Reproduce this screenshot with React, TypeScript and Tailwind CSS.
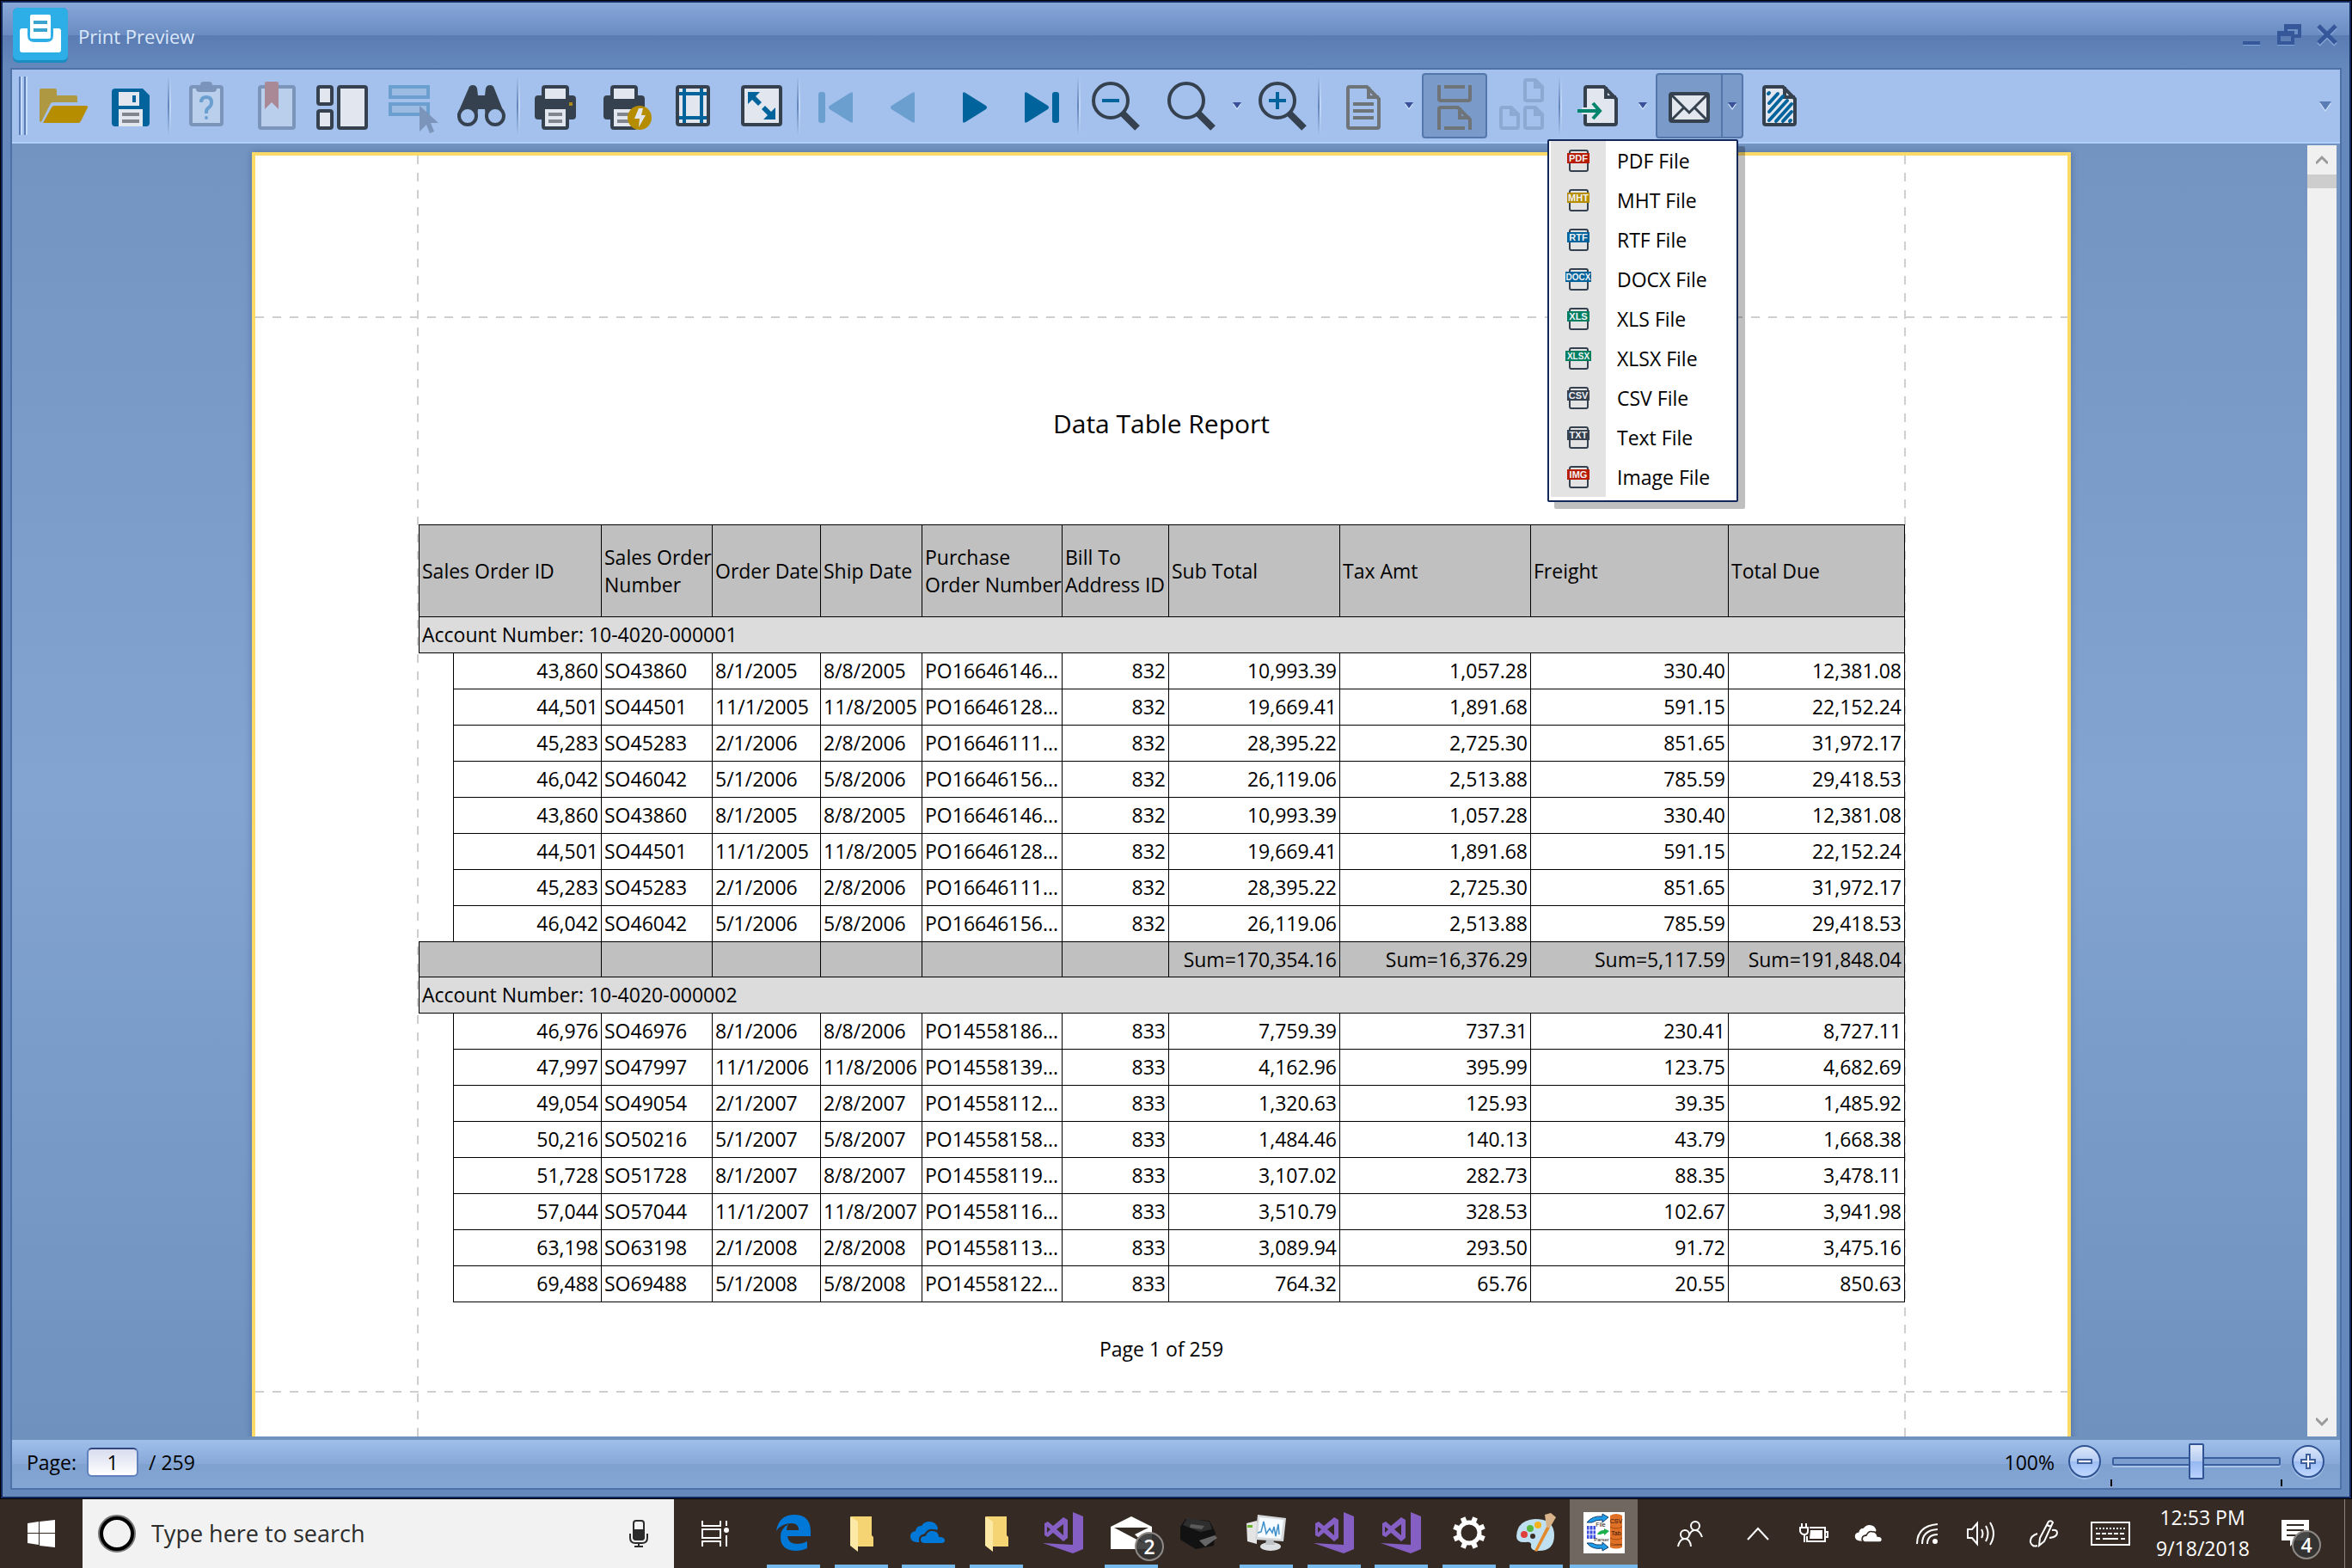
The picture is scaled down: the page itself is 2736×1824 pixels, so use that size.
import type { ReactNode } from 'react';

interface IconProps {
  children: ReactNode;
}

interface ToolButtonProps {
  label: string;
  pressed?: boolean;
  disabled?: boolean;
  children: ReactNode;
}

const DARK = '#364150';
const LIGHT = '#e1e6ef';
const BLUE = '#00639c';
const PALE_BLUE = '#6b9fcf';

const columns = [
  { title: 'Sales Order ID', align: 'right' },
  { title: 'Sales Order Number', align: 'left' },
  { title: 'Order Date', align: 'left' },
  { title: 'Ship Date', align: 'left' },
  { title: 'Purchase Order Number', align: 'left' },
  { title: 'Bill To Address ID', align: 'right' },
  { title: 'Sub Total', align: 'right' },
  { title: 'Tax Amt', align: 'right' },
  { title: 'Freight', align: 'right' },
  { title: 'Total Due', align: 'right' },
];

const firstHalf = [
  ['43,860', 'SO43860', '8/1/2005', '8/8/2005', 'PO16646146...', '832', '10,993.39', '1,057.28', '330.40', '12,381.08'],
  ['44,501', 'SO44501', '11/1/2005', '11/8/2005', 'PO16646128...', '832', '19,669.41', '1,891.68', '591.15', '22,152.24'],
  ['45,283', 'SO45283', '2/1/2006', '2/8/2006', 'PO16646111...', '832', '28,395.22', '2,725.30', '851.65', '31,972.17'],
  ['46,042', 'SO46042', '5/1/2006', '5/8/2006', 'PO16646156...', '832', '26,119.06', '2,513.88', '785.59', '29,418.53'],
];

const groups = [
  {
    account: '10-4020-000001',
    rows: [...firstHalf, ...firstHalf],
    sums: ['Sum=170,354.16', 'Sum=16,376.29', 'Sum=5,117.59', 'Sum=191,848.04'],
  },
  {
    account: '10-4020-000002',
    rows: [
      ['46,976', 'SO46976', '8/1/2006', '8/8/2006', 'PO14558186...', '833', '7,759.39', '737.31', '230.41', '8,727.11'],
      ['47,997', 'SO47997', '11/1/2006', '11/8/2006', 'PO14558139...', '833', '4,162.96', '395.99', '123.75', '4,682.69'],
      ['49,054', 'SO49054', '2/1/2007', '2/8/2007', 'PO14558112...', '833', '1,320.63', '125.93', '39.35', '1,485.92'],
      ['50,216', 'SO50216', '5/1/2007', '5/8/2007', 'PO14558158...', '833', '1,484.46', '140.13', '43.79', '1,668.38'],
      ['51,728', 'SO51728', '8/1/2007', '8/8/2007', 'PO14558119...', '833', '3,107.02', '282.73', '88.35', '3,478.11'],
      ['57,044', 'SO57044', '11/1/2007', '11/8/2007', 'PO14558116...', '833', '3,510.79', '328.53', '102.67', '3,941.98'],
      ['63,198', 'SO63198', '2/1/2008', '2/8/2008', 'PO14558113...', '833', '3,089.94', '293.50', '91.72', '3,475.16'],
      ['69,488', 'SO69488', '5/1/2008', '5/8/2008', 'PO14558122...', '833', '764.32', '65.76', '20.55', '850.63'],
    ],
    sums: null,
  },
];

const formats = [
  { badge: 'PDF', label: 'PDF File', color: '#b81c00' },
  { badge: 'MHT', label: 'MHT File', color: '#b78d00' },
  { badge: 'RTF', label: 'RTF File', color: '#00639c' },
  { badge: 'DOCX', label: 'DOCX File', color: '#00639c' },
  { badge: 'XLS', label: 'XLS File', color: '#008060' },
  { badge: 'XLSX', label: 'XLSX File', color: '#008060' },
  { badge: 'CSV', label: 'CSV File', color: '#364150' },
  { badge: 'TXT', label: 'Text File', color: '#364150' },
  { badge: 'IMG', label: 'Image File', color: '#b81c00' },
];

/* ---------- toolbar icons ---------- */

function Icon({ children }: IconProps) {
  return (
    <svg viewBox="0 0 64 64" className="size-16 shrink-0" fill="none" aria-hidden="true">
      {children}
    </svg>
  );
}

function OpenIcon() {
  return (
    <Icon>
      <path d="M4 50V14q0-2 2-2h16q2 0 2 2v6h22q2 0 2 2v6H20q-3 0-4 3L6 51z" fill="#ae9841" />
      <path d="M21 32h37q3 0 2 2l-8 16q-1 2-3 2H8l10-18q1-2 3-2z" fill="#b78d00" />
    </Icon>
  );
}

function SaveIcon() {
  return (
    <Icon>
      <path d="M12 12h32l8 8v32q0 4-4 4H12q-4 0-4-4V16q0-4 4-4z" fill={BLUE} />
      <path d="M16 16h24v16H16zM16 36h28v20H16z" fill={LIGHT} />
      <path d="M32 20h4v8h-4z" fill={BLUE} />
      <path d="M20 40h20v4H20zM20 48h20v4H20z" fill="#808590" />
    </Icon>
  );
}

function ParametersIcon() {
  return (
    <Icon>
      <rect x="14" y="10" width="36" height="44" rx="2" fill="#b9cfec" stroke="#7b94b9" strokeWidth="4" />
      <path d="M20 8h5q0-4 4-4h6q4 0 4 4h5v4q0 4-4 4H24q-4 0-4-4z" fill="#7b94b9" />
      <path d="M26 28q0-6 6-6t6 6q0 4-3 6t-3 5v2" stroke={PALE_BLUE} strokeWidth="4" />
      <circle cx="32" cy="46" r="2" fill={PALE_BLUE} />
    </Icon>
  );
}

function BookmarksIcon() {
  return (
    <Icon>
      <rect x="14" y="10" width="40" height="48" rx="2" fill="#b9cfec" stroke="#7b94b9" strokeWidth="4" />
      <path d="M20 6q0-2 2-2h12q2 0 2 2v30l-8-8-8 8z" fill="#a98996" />
    </Icon>
  );
}

function ThumbnailsIcon() {
  return (
    <Icon>
      <g fill={LIGHT} stroke={DARK} strokeWidth="4">
        <rect x="2" y="10" width="16" height="20" rx="2" />
        <rect x="2" y="38" width="16" height="20" rx="2" />
        <rect x="26" y="10" width="32" height="48" rx="2" />
      </g>
    </Icon>
  );
}

function EditFieldsIcon() {
  return (
    <Icon>
      <g fill="#9bbbe3" stroke={PALE_BLUE} strokeWidth="4">
        <path d="M6 10h44v12H6zM6 30h44v12H6z" />
      </g>
      <path d="M40 32l22 20h-9l4 10-5 2-4-10-8 8z" fill="#7b94b9" />
    </Icon>
  );
}

function SearchIcon() {
  return (
    <Icon>
      <path d="M17 12q1-4 5-4t5 4l1 8h8l1-8q1-4 5-4t5 4l12 30q0 2-1 4H37l-1-10h-8l-1 10H5q-1-2-1-4z" fill={DARK} />
      <circle cx="16" cy="44" r="10" fill="#a3c1ec" stroke={DARK} strokeWidth="4" />
      <circle cx="48" cy="44" r="10" fill="#a3c1ec" stroke={DARK} strokeWidth="4" />
    </Icon>
  );
}

function PrinterShape() {
  return (
    <>
      <path d="M20 8h24q4 0 4 4v8h4q4 0 4 4v20q0 4-4 4h-4v8q0 4-4 4H20q-4 0-4-4v-8h-4q-4 0-4-4V24q0-4 4-4h4v-8q0-4 4-4z" fill={DARK} />
      <path d="M20 12h24v12H20zM20 36h24v20H20z" fill={LIGHT} />
      <path d="M24 40h16v4H24zM24 48h16v4H24z" fill="#808590" />
    </>
  );
}

function PrintIcon() {
  return (
    <Icon>
      <PrinterShape />
      <path d="M48 28h4v4h-4z" fill="#ab8a17" />
    </Icon>
  );
}

function QuickPrintIcon() {
  return (
    <Icon>
      <PrinterShape />
      <circle cx="50" cy="46" r="14" fill="#b78d00" />
      <path d="M49 35h5l-2 8h5l-8 14 1-10h-6z" fill={LIGHT} />
    </Icon>
  );
}

function MarginsIcon() {
  return (
    <Icon>
      <rect x="14" y="10" width="36" height="44" rx="2" fill={LIGHT} />
      <path d="M22 12v40M42 12v40M16 18h32M16 46h32" stroke={BLUE} strokeWidth="4" />
      <rect x="14" y="10" width="36" height="44" rx="2" stroke={DARK} strokeWidth="4" />
    </Icon>
  );
}

function ScaleIcon() {
  return (
    <Icon>
      <rect x="10" y="10" width="44" height="44" rx="2" fill={LIGHT} stroke={DARK} strokeWidth="4" />
      <path d="M16 16h14l-5 5 7 7-4 4-7-7-5 5zM48 48H34l5-5-7-7 4-4 7 7 5-5z" fill={BLUE} />
    </Icon>
  );
}

function FirstIcon() {
  return (
    <Icon>
      <rect x="12" y="16" width="8" height="36" rx="3" fill={PALE_BLUE} />
      <path d="M52 18v32q0 3-3 1L25 36q-2-2 0-4l24-15q3-2 3 1z" fill={PALE_BLUE} />
    </Icon>
  );
}

function PrevIcon() {
  return (
    <Icon>
      <path d="M44 18v32q0 3-3 1L17 36q-2-2 0-4l24-15q3-2 3 1z" fill={PALE_BLUE} />
    </Icon>
  );
}

function NextIcon() {
  return (
    <Icon>
      <path d="M20 18v32q0 3 3 1l24-15q2-2 0-4L23 17q-3-2-3 1z" fill={BLUE} />
    </Icon>
  );
}

function LastIcon() {
  return (
    <Icon>
      <path d="M12 18v32q0 3 3 1l24-15q2-2 0-4L15 17q-3-2-3 1z" fill={BLUE} />
      <rect x="44" y="16" width="8" height="36" rx="3" fill={BLUE} />
    </Icon>
  );
}

function ZoomIcon({ sign }: { sign?: string }) {
  return (
    <Icon>
      <circle cx="26" cy="26" r="20" stroke={DARK} strokeWidth="4" />
      <path d="M40 41l17 17" stroke={DARK} strokeWidth="8" />
      {sign && <path d={sign} stroke={BLUE} strokeWidth="4" />}
    </Icon>
  );
}

function PageIcon() {
  return (
    <Icon>
      <path d="M16 10h20l14 14v32q0 2-2 2H16q-2 0-2-2V12q0-2 2-2z" stroke="#6e7478" strokeWidth="4" />
      <path d="M38 10v12h12" stroke="#6e7478" strokeWidth="4" />
      <path d="M20 30h24M20 38h24M20 46h24" stroke="#6e7478" strokeWidth="4" />
    </Icon>
  );
}

function ContinuousIcon() {
  return (
    <Icon>
      <g stroke="#6e7478" strokeWidth="4">
        <path d="M14 8v16q0 2 2 2h32q2 0 2-2V8M20 10h24M20 58h24" />
        <path d="M14 60V36q0-2 2-2h20l14 14v12M38 34v12h12" />
      </g>
    </Icon>
  );
}

function PagesIcon() {
  return (
    <Icon>
      <g stroke="#8ba9d3" strokeWidth="4">
        <path d="M36 2h10l8 8v14q0 2-2 2H36q-2 0-2-2V4q0-2 2-2zM46 2v8h8" />
        <path d="M36 34h10l8 8v14q0 2-2 2H36q-2 0-2-2V36q0-2 2-2zM46 34v8h8" />
        <path d="M8 34h10l8 8v14q0 2-2 2H8q-2 0-2-2V36q0-2 2-2zM18 34v8h8" />
      </g>
    </Icon>
  );
}

function ExportIcon() {
  return (
    <Icon>
      <path d="M20 10h20l14 14v28q0 2-2 2H20q-2 0-2-2V12q0-2 2-2z" fill={LIGHT} stroke={DARK} strokeWidth="4" />
      <path d="M42 10v12h12" stroke={DARK} strokeWidth="4" />
      <path d="M14 38h18" stroke={LIGHT} strokeWidth="8" />
      <path d="M9 38h26M27 29l8 9-8 9" stroke="#00846b" strokeWidth="4" />
    </Icon>
  );
}

function MailIcon() {
  return (
    <Icon>
      <rect x="10" y="18" width="44" height="32" rx="2" fill={LIGHT} stroke={DARK} strokeWidth="4" />
      <path d="M12 20l20 20 20-20M12 48l14-14M52 48L38 34" stroke={DARK} strokeWidth="3" />
    </Icon>
  );
}

function WatermarkIcon() {
  return (
    <Icon>
      <path d="M16 10h20l14 14v28q0 2-2 2H16q-2 0-2-2V12q0-2 2-2z" fill={LIGHT} stroke={DARK} strokeWidth="4" />
      <path d="M38 10v12h12" stroke={DARK} strokeWidth="4" />
      <path d="M19 18l1-1M20 29l10-11M20 39l16-18M20 49l21-23M28 50l18-20M36 50l10-11M44 50l1-1" stroke={BLUE} strokeWidth="4" strokeLinecap="round" />
    </Icon>
  );
}

function FormatIcon({ badge, color }: { badge: string; color: string }) {
  const wide = badge.length > 3;
  return (
    <svg viewBox="0 0 32 28" className="h-7 w-8" fill="none" aria-hidden="true">
      <rect x="6" y="2" width="21" height="24" rx="2" stroke={DARK} strokeWidth="2" />
      <rect x={wide ? 1 : 3} y="5" width={wide ? 30 : 26} height="12" fill={color} />
      <text x="16" y="15" textAnchor="middle" fontSize={wide ? 10 : 11} fontWeight="bold" fontFamily="Liberation Sans, sans-serif" fill="#f0f2f6">
        {badge}
      </text>
    </svg>
  );
}

/* ---------- toolbar parts ---------- */

function ToolButton({ label, pressed, disabled, children }: ToolButtonProps) {
  return (
    <button
      type="button"
      aria-label={label}
      aria-pressed={pressed}
      disabled={disabled}
      className={`mx-0.5 flex h-[76px] w-[76px] shrink-0 items-center justify-center rounded border-2 ${
        pressed ? 'border-[#5377ab] bg-[#7a9ac9]' : 'border-transparent'
      }`}
    >
      {children}
    </button>
  );
}

function DownArrow() {
  return (
    <svg viewBox="0 0 12 10" className="h-2.5 w-3" aria-hidden="true">
      <path d="M1 3h10L6 10z" fill="#cfe2fb" />
      <path d="M1 1h10L6 8z" fill="#3a5199" />
    </svg>
  );
}

function DropButton({ label }: { label: string }) {
  return (
    <button type="button" aria-label={label} className="flex h-[76px] w-[26px] shrink-0 items-center justify-center">
      <DownArrow />
    </button>
  );
}

function Separator() {
  return (
    <div className="flex h-[68px] w-1.5 shrink-0 justify-center">
      <div className="w-0.5 bg-linear-to-b from-transparent via-[#6284b8] to-transparent" />
      <div className="w-0.5 bg-linear-to-b from-transparent via-[#c2d8f7] to-transparent" />
    </div>
  );
}

function ExportMenu() {
  return (
    <div role="menu" className="absolute top-[77px] -left-[126px] z-20 w-[222px] rounded-xs border-2 border-[#12285a] bg-white px-0.5 pb-1 shadow-[8px_8px_0_rgba(0,0,0,0.25)]">
      {formats.map((format) => (
        <button key={format.label} type="button" role="menuitem" className="flex h-[46px] w-full items-center">
          <span className="flex h-full w-16 shrink-0 items-center justify-center bg-[#e3e3e3]">
            <FormatIcon badge={format.badge} color={format.color} />
          </span>
          <span className="pl-[13px] text-[23px] whitespace-nowrap text-black">{format.label}</span>
        </button>
      ))}
    </div>
  );
}

function Toolbar() {
  return (
    <div role="toolbar" aria-label="Preview" className="flex h-[86px] shrink-0 items-center border-b-2 border-[#b0cffb] bg-[#a3c1ec] pl-2">
      <div className="flex h-[68px] w-3 shrink-0 gap-0.5">
        <div className="w-1 border-r-2 border-l-2 border-r-[#c4dbfa] border-l-[#5b7db5]" />
        <div className="w-1 border-r-2 border-l-2 border-r-[#c4dbfa] border-l-[#5b7db5]" />
      </div>
      <ToolButton label="Open"><OpenIcon /></ToolButton>
      <ToolButton label="Save"><SaveIcon /></ToolButton>
      <Separator />
      <ToolButton label="Parameters" disabled><ParametersIcon /></ToolButton>
      <ToolButton label="Bookmarks" disabled><BookmarksIcon /></ToolButton>
      <ToolButton label="Thumbnails"><ThumbnailsIcon /></ToolButton>
      <ToolButton label="Editing Fields" disabled><EditFieldsIcon /></ToolButton>
      <ToolButton label="Search"><SearchIcon /></ToolButton>
      <Separator />
      <ToolButton label="Print"><PrintIcon /></ToolButton>
      <ToolButton label="Quick Print"><QuickPrintIcon /></ToolButton>
      <ToolButton label="Page Setup"><MarginsIcon /></ToolButton>
      <ToolButton label="Scale"><ScaleIcon /></ToolButton>
      <Separator />
      <ToolButton label="First Page" disabled><FirstIcon /></ToolButton>
      <ToolButton label="Previous Page" disabled><PrevIcon /></ToolButton>
      <ToolButton label="Next Page"><NextIcon /></ToolButton>
      <ToolButton label="Last Page"><LastIcon /></ToolButton>
      <Separator />
      <ToolButton label="Zoom Out"><ZoomIcon sign="M16 26h20" /></ToolButton>
      <div className="ml-2 flex">
        <ToolButton label="Zoom"><ZoomIcon /></ToolButton>
        <DropButton label="Zoom levels" />
      </div>
      <ToolButton label="Zoom In"><ZoomIcon sign="M16 26h20M26 16v20" /></ToolButton>
      <Separator />
      <div className="ml-2 flex">
        <ToolButton label="Page Layout"><PageIcon /></ToolButton>
        <DropButton label="Page layouts" />
      </div>
      <ToolButton label="Continuous Scrolling" pressed><ContinuousIcon /></ToolButton>
      <ToolButton label="Many Pages" disabled><PagesIcon /></ToolButton>
      <Separator />
      <ToolButton label="Export"><ExportIcon /></ToolButton>
      <DropButton label="Export formats" />
      <div className="relative mx-0.5 flex shrink-0">
        <div className="flex h-[76px] rounded border-2 border-[#5377ab] bg-[#7a9ac9]">
          <button type="button" aria-label="Send via E-Mail" className="flex w-[76px] items-center justify-center border-r-2 border-[#5377ab]">
            <MailIcon />
          </button>
          <button type="button" aria-label="Send formats" aria-expanded="true" className="flex w-[22px] items-center justify-center">
            <DownArrow />
          </button>
        </div>
        <ExportMenu />
      </div>
      <ToolButton label="Watermark"><WatermarkIcon /></ToolButton>
      <button type="button" aria-label="Toolbar options" className="mr-2.5 ml-auto">
        <svg viewBox="0 0 14 13" className="h-[13px] w-3.5" aria-hidden="true">
          <path d="M0 3h14L7 13z" fill="#cfe2fb" />
          <path d="M0 1h14L7 11z" fill="#5b7db5" />
        </svg>
      </button>
    </div>
  );
}

function TitleBar() {
  return (
    <header className="flex h-[76px] shrink-0 items-center bg-[linear-gradient(#88a7d9_0%,#6a8cc2_50%,#5a7cb3_50%,#6588bd_100%)] pr-3 pl-3">
      <svg viewBox="0 0 64 64" className="size-16" aria-hidden="true">
        <rect width="64" height="64" rx="6" fill="#1c8dc0" />
        <rect width="64" height="61" rx="6" fill="#2eaee6" />
        <path d="M8 27q0-3 3-3h6v8q0 8 8 8h14q8 0 8-8v-8h6q3 0 3 3v22q0 3-3 3H11q-3 0-3-3z" fill="#fff" />
        <path d="M20 10q0-2 2-2h20q2 0 2 2v24q0 2-2 2H22q-2 0-2-2z" fill="#fff" />
        <path d="M24 17h16M24 26h16" stroke="#3aa4cf" strokeWidth="4" />
      </svg>
      <h1 className="ml-3 pt-0.5 text-[22px] text-[#dbe8fb]">Print Preview</h1>
      <div className="mr-0.5 ml-auto flex items-center gap-[18px] text-[#36589a]">
        <button type="button" aria-label="Minimize">
          <svg viewBox="0 0 22 26" className="h-[26px] w-[22px]" aria-hidden="true">
            <path d="M0 20h20v4H0z" fill="currentColor" />
            <path d="M0 24h20v1H0z" fill="#85a4d6" />
          </svg>
        </button>
        <button type="button" aria-label="Restore">
          <svg viewBox="0 0 28 26" className="h-[26px] w-7" aria-hidden="true">
            <path d="M0 8h8V0h20v16h-8v8H0zM12 8h8v4h4V6H12zM4 14v6h12v-6z" fill="currentColor" fillRule="evenodd" />
            <path d="M0 24h20v1H0z" fill="#85a4d6" />
          </svg>
        </button>
        <button type="button" aria-label="Close">
          <svg viewBox="0 0 24 26" className="h-[26px] w-6" aria-hidden="true">
            <path d="M2 4l20 20M22 4L2 24" stroke="#85a4d6" strokeWidth="5" />
            <path d="M2 2l20 20M22 2L2 22" stroke="currentColor" strokeWidth="5" />
          </svg>
        </button>
      </div>
    </header>
  );
}

/* ---------- report ---------- */

function ReportTable() {
  return (
    <table className="relative w-full table-fixed border-collapse text-[23px] leading-8">
      <colgroup>
        <col className="w-[40px]" />
        <col className="w-[172px]" />
        <col className="w-[129px]" />
        <col className="w-[126px]" />
        <col className="w-[118px]" />
        <col className="w-[163px]" />
        <col className="w-[124px]" />
        <col className="w-[199px]" />
        <col className="w-[222px]" />
        <col className="w-[230px]" />
        <col className="w-[205px]" />
      </colgroup>
      <thead>
        <tr className="h-[107px] bg-[#c0c0c0]">
          {columns.map((column, index) => (
            <th key={column.title} colSpan={index === 0 ? 2 : 1} className="border border-black pl-[3px] text-left font-normal">
              {column.title}
            </th>
          ))}
        </tr>
      </thead>
      {groups.map((group) => (
        <tbody key={group.account}>
          <tr className="h-[42px] bg-[#dcdcdc]">
            <th colSpan={11} className="border border-black px-[3px] pb-0.5 text-left font-normal">
              Account Number: {group.account}
            </th>
          </tr>
          {group.rows.map((row, index) => (
            <tr key={index} className="h-[42px]">
              <td />
              {row.map((value, i) => (
                <td
                  key={columns[i].title}
                  className={`border border-black px-[3px] pb-0.5 whitespace-nowrap ${columns[i].align === 'right' ? 'text-right' : 'text-left'}`}
                >
                  {value}
                </td>
              ))}
            </tr>
          ))}
          {group.sums && (
            <tr className="h-[41px] bg-[#c0c0c0]">
              <td colSpan={2} className="border border-black" />
              {[1, 2, 3, 4, 5].map((n) => (
                <td key={n} className="border border-black" />
              ))}
              {group.sums.map((sum) => (
                <td key={sum} className="border border-black px-[3px] text-right whitespace-nowrap">{sum}</td>
              ))}
            </tr>
          )}
        </tbody>
      ))}
    </table>
  );
}

function MarginGuides() {
  return (
    <div className="pointer-events-none absolute inset-0">
      <div className="absolute inset-y-0 left-[188px] w-0.5 bg-[repeating-linear-gradient(to_bottom,#cfcfd2_0_10px,transparent_10px_20px)]" />
      <div className="absolute inset-y-0 right-[188px] w-0.5 bg-[repeating-linear-gradient(to_bottom,#cfcfd2_0_10px,transparent_10px_20px)]" />
      <div className="absolute inset-x-0 top-[187px] h-0.5 bg-[repeating-linear-gradient(to_right,#cfcfd2_0_10px,transparent_10px_20px)]" />
      <div className="absolute inset-x-0 top-[1437px] h-0.5 bg-[repeating-linear-gradient(to_right,#cfcfd2_0_10px,transparent_10px_20px)]" />
    </div>
  );
}

function Preview() {
  return (
    <div className="flex min-h-0 flex-1 bg-linear-to-b from-[#7394c1] via-[#83a4d1] to-[#6e91be] pt-0.5 pr-1 pb-1">
      <main className="min-w-0 flex-1 overflow-hidden pt-2 pl-1">
        <article className="relative mx-auto h-[1640px] w-full max-w-[2116px] border-4 border-[#fbda67] bg-white px-[190px] shadow-[0_0_8px_rgba(30,60,110,0.4)]">
          <MarginGuides />
          <h2 className="pt-[288px] pb-[93px] text-center text-[30px] leading-[48px]">Data Table Report</h2>
          <ReportTable />
          <p className="pt-[38px] text-center text-[23px] leading-8">Page 1 of 259</p>
        </article>
      </main>
      <div className="flex w-[34px] shrink-0 flex-col bg-[#f0f0f0]">
        <button type="button" aria-label="Scroll up" className="flex h-[34px] items-center justify-center">
          <svg viewBox="0 0 14 12" className="h-3 w-3.5" aria-hidden="true">
            <path d="M0 10l7-7 7 7" stroke="#9a9a9a" strokeWidth="3" fill="none" />
          </svg>
        </button>
        <div className="h-4 bg-[#cdcdcd]" />
        <button type="button" aria-label="Scroll down" className="mt-auto flex h-[34px] items-center justify-center">
          <svg viewBox="0 0 14 12" className="h-3 w-3.5" aria-hidden="true">
            <path d="M0 2l7 7 7-7" stroke="#9a9a9a" strokeWidth="3" fill="none" />
          </svg>
        </button>
      </div>
    </div>
  );
}

function RoundButton({ label, d }: { label: string; d: string }) {
  return (
    <button
      type="button"
      aria-label={label}
      className="flex size-[38px] shrink-0 items-center justify-center rounded-full border-2 border-[#2f5393] bg-[linear-gradient(#dbe7fa_0%,#b4cbf3_50%,#9cbcf3_50%,#c0d8ff_100%)] shadow-[0_2px_1px_rgba(180,205,240,0.7)]"
    >
      <svg viewBox="0 0 20 20" className="size-5" aria-hidden="true">
        <path d={d} fill="#fff" stroke="#3f5f9b" strokeWidth="2" />
      </svg>
    </button>
  );
}

function StatusBar() {
  return (
    <footer className="flex h-14 shrink-0 items-center bg-[linear-gradient(#9fbfea_0%,#87a8d8_50%,#80a2d0_50%,#83a5d3_100%)] pr-[18px] pb-1 pl-[17px] text-[23px]">
      <label htmlFor="page" className="w-[70px]">Page:</label>
      <input
        id="page"
        defaultValue="1"
        className="h-[34px] w-[60px] rounded-md border-2 border-[#5f82bd] border-t-[#2f4580] bg-linear-to-b from-[#d8dcee] to-white text-center"
      />
      <span className="ml-3">/ 259</span>
      <label htmlFor="zoom" className="ml-auto">100%</label>
      <div className="ml-4 flex items-center gap-[11px] pb-0.5">
        <RoundButton label="Zoom out" d="M2 8h16v4H2z" />
        <div className="relative flex h-[38px] w-[200px] items-center">
          <input
            id="zoom"
            type="range"
            defaultValue="50"
            className="mx-0.5 h-2.5 w-full appearance-none rounded-xs border-2 border-[#3a5f9e] bg-[#7d9fd0] shadow-[0_2px_0_rgba(180,205,240,0.8)] [&::-webkit-slider-thumb]:h-[42px] [&::-webkit-slider-thumb]:w-[18px] [&::-webkit-slider-thumb]:appearance-none [&::-webkit-slider-thumb]:rounded-xs [&::-webkit-slider-thumb]:border-2 [&::-webkit-slider-thumb]:border-[#2f5393] [&::-webkit-slider-thumb]:bg-[linear-gradient(#dfe9fa_0%,#b5cbf0_50%,#94b6f0_50%,#b9d2ff_100%)]"
          />
          <span className="absolute top-10 left-0 h-2 w-0.5 bg-black" />
          <span className="absolute top-10 right-0 h-2 w-0.5 bg-black" />
        </div>
        <RoundButton label="Zoom in" d="M8 2h4v6h6v4h-6v6H8v-6H2V8h6z" />
      </div>
    </footer>
  );
}

/* ---------- taskbar ---------- */

function VisualStudioIcon() {
  return (
    <svg viewBox="0 0 48 48" className="size-12" aria-hidden="true">
      <path d="M35 0l12 5v38l-12 5L0 36l35 2z" fill="#865fc5" />
      <path d="M24 6l5 3v21l-5 4-12-10-6 5-4-2V13l4-2 6 5zM24 14l-8 6 8 7zM5 17v7l4-4z" fill="#865fc5" fillRule="evenodd" />
    </svg>
  );
}

function FolderIcon() {
  return (
    <svg viewBox="0 0 48 48" className="size-12" aria-hidden="true">
      <path d="M12 5h24v22l2 2v11H14z" fill="#f5d573" />
      <path d="M11 5l9 6v35l-9-7z" fill="#fde9a6" />
    </svg>
  );
}

function CloudIcon({ front, gap, size }: { front: string; gap: string; size: string }) {
  return (
    <svg viewBox="0 0 44 28" className={size} aria-hidden="true">
      <path d="M8 25Q1 24 1 18q0-5 6-6 1-6 7-6 3-5 9-5 8 0 10 8l-1 2q-8-3-13 4-8 1-8 7 0 2 1 3z" fill={front} />
      <path d="M18 27q-6 0-6-5 0-5 6-5 3-7 9-6 7 0 8 7 7 0 7 5 0 4-5 4z" fill={front} stroke={gap} strokeWidth="2" />
    </svg>
  );
}

function CountBadge({ count }: { count: string }) {
  return (
    <span className="absolute -right-3.5 -bottom-3.5 flex size-[34px] items-center justify-center rounded-full border-2 border-[#8f8a86] bg-[#343434]/90 text-[23px] leading-none font-semibold text-white">
      {count}
    </span>
  );
}

const tasks = [
  {
    name: 'Edge',
    running: true,
    icon: (
      <svg viewBox="0 0 40 42" className="h-[42px] w-10" aria-hidden="true">
        <path d="M0 19Q3 0 21 0q19 0 19 20v5H13q1 9 12 9 6 0 11-3v8q-6 3-14 3Q5 41 5 26q0-10 9-15-2 3-2 7h14q0-8-8-8Q6 10 0 19z" fill="#0078d7" />
      </svg>
    ),
  },
  { name: 'Documents', running: true, icon: <FolderIcon /> },
  { name: 'OneDrive', running: true, icon: <CloudIcon front="#0078d7" gap="#362b24" size="h-7 w-11" /> },
  { name: 'File Explorer', running: true, icon: <FolderIcon /> },
  { name: 'Visual Studio', running: false, icon: <VisualStudioIcon /> },
  {
    name: 'Mail',
    running: true,
    icon: (
      <span className="relative flex">
        <svg viewBox="0 0 48 38" className="h-[38px] w-12" aria-hidden="true">
          <path d="M0 12L24 0l24 12v26H0z" fill="#fff" />
          <path d="M4 13h40L28 21l12 11z" fill="#352b25" />
        </svg>
        <CountBadge count="2" />
      </span>
    ),
  },
  {
    name: 'Printer',
    running: false,
    icon: (
      <svg viewBox="0 0 46 38" className="h-[38px] w-[46px]" aria-hidden="true">
        <path d="M8 3l28 2 7 14-2 15-21 4L2 27V12z" fill="#121212" />
        <path d="M10 2l26 4 3 9-14 3L5 10z" fill="#2e2e2e" />
        <path d="M14 9l16 2-3 4-14-2z" fill="#5a5a5a" />
        <path d="M24 28l18-6 3 3-14 10z" fill="#666" />
      </svg>
    ),
  },
  {
    name: 'Performance Monitor',
    running: true,
    icon: (
      <svg viewBox="0 0 46 42" className="h-[42px] w-[46px]" aria-hidden="true">
        <path d="M0 10l12-3v27L1 31z" fill="#e4e4e4" />
        <path d="M1 12h6v3H1z" fill="#6cb82c" />
        <path d="M13 0l33 4-3 27-33-2z" fill="#d5d9db" />
        <path d="M15 3l28 3-3 22-27-2z" fill="#f5fbfe" />
        <path d="M13 21l4-1 3-12 3 14 4-6 3 5 2-7 2 11 3-14 1 12" stroke="#3f8fc9" strokeWidth="1.5" fill="none" />
        <ellipse cx="28" cy="37" rx="12" ry="5" fill="#dcdfe1" />
        <path d="M23 29h8l2 6H22z" fill="#bfc3c6" />
      </svg>
    ),
  },
  { name: 'Visual Studio project', running: true, icon: <VisualStudioIcon /> },
  { name: 'Visual Studio samples', running: true, icon: <VisualStudioIcon /> },
  {
    name: 'Settings',
    running: true,
    icon: (
      <svg viewBox="0 0 40 40" className="size-10" aria-hidden="true">
        <circle cx="20" cy="20" r="12" stroke="#fff" strokeWidth="5" fill="none" />
        <g stroke="#fff" strokeWidth="6">
          <path d="M20 1v6M20 33v6M1 20h6M33 20h6" transform="rotate(22 20 20)" />
          <path d="M20 1v6M20 33v6M1 20h6M33 20h6" transform="rotate(67 20 20)" />
        </g>
      </svg>
    ),
  },
  {
    name: 'Paint',
    running: true,
    icon: (
      <svg viewBox="0 0 46 48" className="h-12 w-[46px]" aria-hidden="true">
        <path d="M22 8q22 0 22 19 0 18-18 18-10 0-9-6 1-5-6-4-11 1-11-7Q1 9 22 8z" fill="#bfe0f0" />
        <circle cx="9" cy="26" r="4" fill="#e0403a" />
        <circle cx="16" cy="19" r="4" fill="#59b83f" />
        <circle cx="25" cy="15" r="4" fill="#f4b31c" />
        <circle cx="19" cy="28" r="3" fill="#3a2d26" />
        <path d="M35 17l4 1-15 28-3-1z" fill="#e38a2c" />
        <path d="M35 17l-2-14 7-2 6 5-7 12z" fill="#d9b48a" />
      </svg>
    ),
  },
];

function ParserIcon() {
  return (
    <svg viewBox="0 0 48 48" className="size-12" aria-hidden="true">
      <rect width="48" height="48" fill="#fff" />
      <path d="M4 12Q10 4 22 5V2l7 4-7 6V9q-8 0-12 3zM4 36q6 8 18 6v3l7-4-7-6v3q-8 1-12-2z" fill="#1e9be9" stroke="#11406e" />
      <path d="M16 26q2-5 8-5v-2l6 3-6 5v-2q-3 0-4 1z" fill="#1eb04c" />
      <path d="M4 16h10v15H4z" fill="#3d4fe0" />
      <path d="M4 21h10M4 26h10M7 16v15M11 16v15" stroke="#fff" />
      <path d="M31 4q7-4 14 0v37q-7 3-14 0z" fill="#e07026" />
      <path d="M31 17q7 4 14 0M31 30q7 4 14 0" stroke="#a34a10" fill="none" />
      <g fontSize="7" fontFamily="Liberation Sans, sans-serif" fill="#2a1206" textAnchor="middle">
        <text x="38" y="13">CSV</text>
        <text x="38" y="27">Tab</text>
        <text x="38" y="39" fontSize="4">Custom</text>
        <text x="20" y="17">File</text>
        <text x="21" y="34" fontSize="6">Parser</text>
      </g>
    </svg>
  );
}

function Tray() {
  return (
    <div className="flex h-full items-center text-white">
      <svg viewBox="0 0 30 32" className="mr-[51px] h-8 w-[30px]" fill="none" stroke="currentColor" strokeWidth="2" aria-hidden="true">
        <circle cx="21" cy="7" r="5" />
        <circle cx="9" cy="17" r="5" />
        <path d="M14 18q2-6 7-6t8 8M1 31q2-9 8-9t7 9" />
      </svg>
      <svg viewBox="0 0 26 16" className="mr-[35px] h-4 w-[26px]" fill="none" stroke="currentColor" strokeWidth="2" aria-hidden="true">
        <path d="M1 15L13 2l12 13" />
      </svg>
      <svg viewBox="0 0 34 24" className="mr-[30px] h-6 w-[34px]" fill="none" stroke="currentColor" strokeWidth="2" aria-hidden="true">
        <path d="M12 5h18v16H9v-6M30 10h3v6h-3" />
        <path d="M13 8h14v10H12z" fill="currentColor" stroke="none" />
        <path d="M3 0v5M8 0v5M1 5h9v4q0 4-4 4t-5-4zM6 13v9" />
      </svg>
      <span className="mr-[38px] flex"><CloudIcon front="#fff" gap="#362b24" size="h-[22px] w-[34px]" /></span>
      <svg viewBox="0 0 26 26" className="mr-[33px] size-[26px]" fill="none" stroke="currentColor" strokeWidth="2" aria-hidden="true">
        <circle cx="22" cy="22" r="3" fill="currentColor" stroke="none" />
        <path d="M1 25Q1 4 25 2M7 25Q7 9 25 8M13 25q0-11 12-11" />
      </svg>
      <svg viewBox="0 0 34 30" className="mr-[38px] h-[30px] w-[34px]" fill="none" stroke="currentColor" strokeWidth="2" aria-hidden="true">
        <path d="M1 10h5l6-7v24l-6-7H1zM17 10q3 5 0 10M22 6q5 9 0 18M27 2q8 13 0 26" />
      </svg>
      <svg viewBox="0 0 34 34" className="mr-[38px] size-[34px]" fill="none" stroke="currentColor" strokeWidth="2" aria-hidden="true">
        <path d="M13 22L23 3q3-2 5 1L18 26l-6 5zM21 7l5 2" />
        <path d="M10 17q-9 3-8 10 2 6 8 4M27 13q6-1 6 3 0 5-9 6" />
      </svg>
      <svg viewBox="0 0 46 28" className="mr-[30px] h-7 w-[46px]" fill="none" stroke="currentColor" strokeWidth="2" aria-hidden="true">
        <rect x="1" y="1" width="44" height="26" />
        <path d="M6 8h34" strokeDasharray="2 2" />
        <path d="M6 14h34" strokeDasharray="5 2" />
        <path d="M6 20h5M14 20h18M35 20h5" />
      </svg>
      <div className="w-[108px] pb-0.5 text-center text-[23px] leading-9 whitespace-nowrap">
        <div>12:53 PM</div>
        <div>9/18/2018</div>
      </div>
      <button type="button" aria-label="Notifications" className="relative mr-[41px] ml-[38px]">
        <svg viewBox="0 0 32 32" className="size-8" aria-hidden="true">
          <path d="M0 0h32v24H16l-6 7v-7H0z" fill="#fff" />
          <path d="M6 6h20M6 12h20M6 18h14" stroke="#352b25" strokeWidth="2" />
        </svg>
        <CountBadge count="4" />
      </button>
      <div className="mr-2 h-full w-px bg-[#8a837e]" />
    </div>
  );
}

function Taskbar() {
  return (
    <nav aria-label="Taskbar" className="flex h-20 shrink-0 items-center bg-[#362b24]">
      <button type="button" aria-label="Start" className="flex h-full w-24 shrink-0 items-center justify-center">
        <svg viewBox="0 0 32 32" className="size-8" aria-hidden="true">
          <path d="M0 4l13-2v13H0zM14 2l18-2v15H14zM0 16h13v13L0 27zM14 16h18v16l-18-2z" fill="#fff" />
        </svg>
      </button>
      <div className="flex h-full w-[688px] shrink-0 items-center bg-[#f2f2f2] pr-[30px] pl-[18px]">
        <svg viewBox="0 0 44 44" className="size-11 shrink-0" fill="none" aria-hidden="true">
          <circle cx="22" cy="22" r="20" stroke="#777" strokeWidth="4" />
          <circle cx="22" cy="22" r="18" stroke="#000" strokeWidth="4" />
        </svg>
        <input
          aria-label="Search"
          placeholder="Type here to search"
          className="ml-[18px] min-w-0 flex-1 bg-transparent text-[27px] placeholder:text-[#2b2b2b]"
        />
        <svg viewBox="0 0 22 32" className="h-8 w-[22px] shrink-0" fill="none" stroke="#2b2b2b" strokeWidth="2" aria-hidden="true">
          <rect x="5" y="1" width="12" height="22" rx="3" />
          <path d="M5 12h12v8q0 3-3 3H8q-3 0-3-3z" fill="#2b2b2b" />
          <path d="M1 16v5q0 6 6 6h8q6 0 6-6v-5M11 27v4M6 31h10" />
        </svg>
      </div>
      <button type="button" aria-label="Task View" className="flex h-full w-24 shrink-0 items-center justify-center">
        <svg viewBox="0 0 34 32" className="h-8 w-[34px]" fill="none" stroke="#fff" strokeWidth="2" aria-hidden="true">
          <path d="M2 1v6h21V1M2 31v-6h21v6M2 11h21v10H2zM30 1v6M30 18v13" />
          <circle cx="30" cy="12" r="3" fill="#fff" stroke="none" />
        </svg>
      </button>
      <div className="ml-1 grid h-full w-[1021px] shrink-0 grid-cols-13">
        {tasks.map((task) => (
          <button key={task.name} type="button" aria-label={task.name} className="flex flex-col items-center">
            <span className="flex h-[76px] items-center justify-center pt-0.5">{task.icon}</span>
            {task.running && <span className="h-1 w-[62px] bg-[#76b9ed]" />}
          </button>
        ))}
        <button type="button" aria-label="File Parser" className="flex flex-col items-center bg-[#706761]">
          <span className="flex h-[76px] items-center justify-center pt-0.5"><ParserIcon /></span>
          <span className="h-1 w-full bg-[#76b9ed]" />
        </button>
      </div>
      <div className="ml-auto flex h-full shrink-0">
        <Tray />
      </div>
    </nav>
  );
}

export default function App() {
  return (
    <div className="flex h-screen min-w-[2400px] flex-col overflow-hidden bg-black font-['Open_Sans','Noto_Sans',sans-serif] text-black">
      <div className="flex min-h-0 flex-1 flex-col border border-black">
        <div className="flex min-h-0 flex-1 flex-col border-2 border-[#12285a] bg-[#6588bd]">
          <TitleBar />
          <div className="mx-[9px] mb-2 flex min-h-0 flex-1 flex-col border-2 border-[#4e71a7]">
            <Toolbar />
            <Preview />
            <StatusBar />
          </div>
        </div>
      </div>
      <Taskbar />
    </div>
  );
}
